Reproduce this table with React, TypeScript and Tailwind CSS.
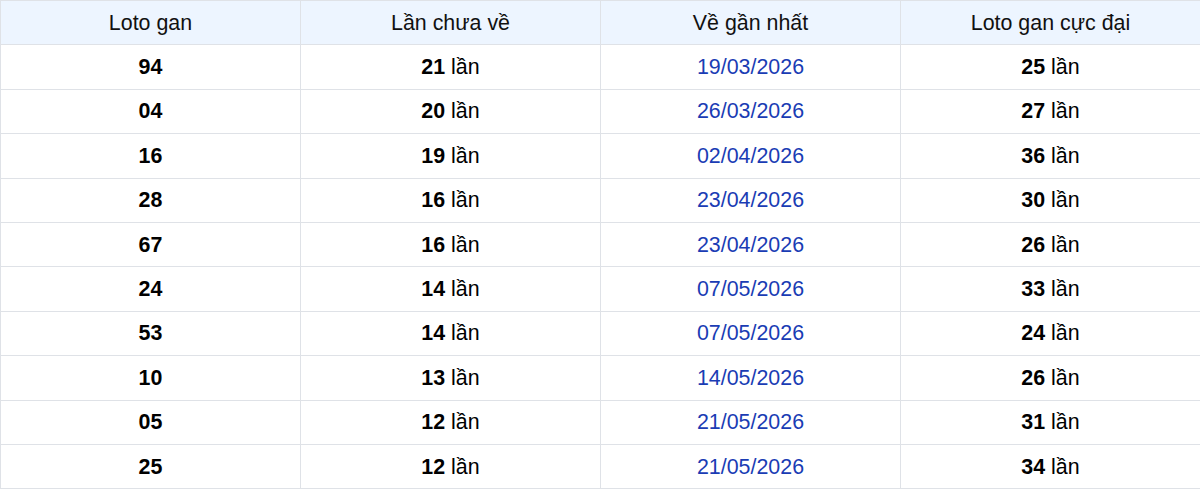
import React from "react";

const rows: [string, string, string, string][] = [
  ["94", "21", "19/03/2026", "25"],
  ["04", "20", "26/03/2026", "27"],
  ["16", "19", "02/04/2026", "36"],
  ["28", "16", "23/04/2026", "30"],
  ["67", "16", "23/04/2026", "26"],
  ["24", "14", "07/05/2026", "33"],
  ["53", "14", "07/05/2026", "24"],
  ["10", "13", "14/05/2026", "26"],
  ["05", "12", "21/05/2026", "31"],
  ["25", "12", "21/05/2026", "34"],
];

export default function App() {
  return (
    <div className="w-[1200px] h-[490px] bg-white overflow-hidden" style={{ fontFamily: '"Liberation Sans", Arial, sans-serif' }}>
      <table className="w-[1201px] border-collapse table-fixed text-[21.4px] text-black">
        <thead>
          <tr className="h-[44.4px] bg-[#edf5ff]">
            {["Loto gan", "Lần chưa về", "Về gần nhất", "Loto gan cực đại"].map((h) => (
              <th key={h} className="border border-[#dfe2e7] font-normal text-center p-0 w-[300px] text-[#111]">
                {h}
              </th>
            ))}
          </tr>
        </thead>
        <tbody>
          {rows.map((r, i) => (
            <tr key={i} className="h-[44.4px]">
              <td className="border border-[#dfe2e7] text-center p-0 font-bold">{r[0]}</td>
              <td className="border border-[#dfe2e7] text-center p-0">
                <b>{r[1]}</b> lần
              </td>
              <td className="border border-[#dfe2e7] text-center p-0 text-[#1a3cb4]">{r[2]}</td>
              <td className="border border-[#dfe2e7] text-center p-0">
                <b>{r[3]}</b> lần
              </td>
            </tr>
          ))}
        </tbody>
      </table>
    </div>
  );
}
